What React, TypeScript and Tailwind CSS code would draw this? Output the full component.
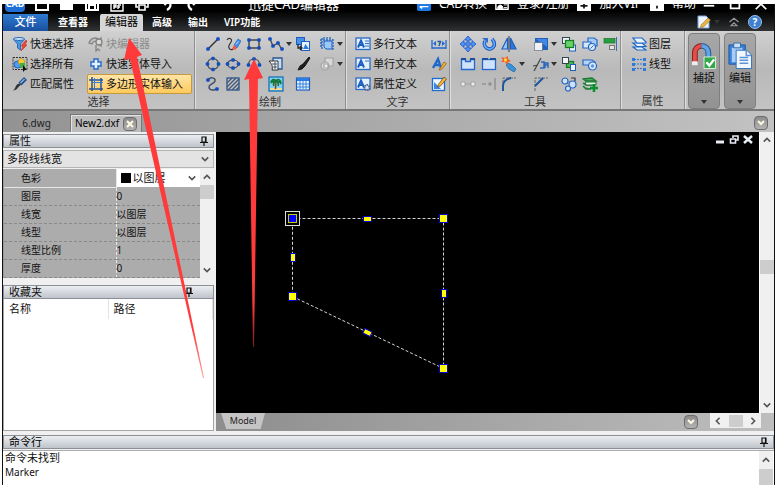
import type { ReactNode } from "react";

const B = "#1d5fc0";

function Svg({ children, size = 16 }: { children: ReactNode; size?: number }) {
  return (
    <svg width={size} height={size} viewBox="0 0 16 16" fill="none" className="shrink-0">
      {children}
    </svg>
  );
}

function Dot({ x, y }: { x: number; y: number }) {
  return <rect x={x - 1.75} y={y - 1.75} width="3.500" height="3.500" rx="1.200" fill="#0f4cc0" />;
}

const letterBox = (
  <>
    <rect x="1" y="2" width="14" height="11.500" fill="#e4effc" stroke="#2a69c4" strokeWidth="1.300" />
    <path d="M3 11.500 6 4.500 9 11.500M4.500 9h3.500" stroke={B} strokeWidth="2" />
  </>
);

const icons: Record<string, ReactNode> = {
  quickSelect: (
    <>
      <path d="M1 3h12L8.500 8v6L5.500 12V8z" fill="#4b97e0" stroke="#2c6db8" />
      <ellipse cx="7" cy="3" rx="5.500" ry="1.500" fill="#c5e0fa" stroke="#2c6db8" />
      <path d="m14 4-5 6h2l-2 5 6-6h-2l2-4z" fill="#f04535" stroke="#c52b22" strokeWidth=".6" />
    </>
  ),
  selectAll: (
    <>
      <rect x="1" y="1.500" width="14" height="12" stroke="#333" strokeDasharray="2 1" />
      <circle cx="5.500" cy="8.500" r="3.500" fill="#4f9cf0" stroke={B} />
      <path d="m6 5 3-3 4 3-2 4-4-1z" fill="#f5ca3a" stroke="#b98c10" strokeWidth=".7" />
      <rect x="8" y="7" width="5" height="5" fill="#46b03a" />
      <path d="M11 9v7l2-2h2z" fill="#111" />
    </>
  ),
  match: (
    <>
      <path d="M8 8 13.500 2.500" stroke="#234d86" strokeWidth="4" />
      <path d="m8.500 7 4-4" stroke="#8fb8ec" strokeWidth="1.300" />
      <path d="M9 8.500 6 11.500c-1 2-3 3-5 3 2-1 2-4 4-6l2-1z" fill="#333" />
    </>
  ),
  blockEdit: (
    <g stroke="#848484" strokeWidth="1.300">
      <path d="M1 7c2-6 8-6 10-3l2-2v8L10 8C8 4 5 5 4 8z" fill="#c0c0c0" />
      <circle cx="11" cy="6" r="3" fill="#dadada" />
      <path d="M8 9v6l2-2 2 2" />
    </g>
  ),
  plus: <path d="M6 3h4v3h3v4h-3v3H6v-3H3V6h3z" fill="#e4f0ff" stroke="#2469ca" strokeWidth="1.400" />,
  hash: (
    <>
      <path d="M4 1v14M1 4h14M1 13h14M13 2v13" stroke="#1f55a4" strokeWidth="1.500" />
      <path d="M6.500 2v11M3 6.500h12" stroke="#3d7bcf" />
    </>
  ),
  line: (
    <>
      <path d="M3 13 13 3" stroke="#333" strokeWidth="1.400" />
      <Dot x={3} y={13} />
      <Dot x={13} y={3} />
    </>
  ),
  freehand: (
    <>
      <path d="M2 4c2-3 6-1 4 2S3 10 4 12s3 2 4 1" stroke="#333" strokeWidth="1.200" />
      <path d="m9 9 4-6 3 2-4 7z" fill="#3f8af0" stroke="#1f60b4" strokeWidth=".6" />
      <path d="m7 13 2-4 3 3-2 2z" fill="#ea5c4c" />
      <path d="M11 8.500 13.500 5.500" stroke="#d6e7ff" />
    </>
  ),
  rect: (
    <>
      <path d="M3 4h10v8H3z" stroke="#444" strokeWidth="1.400" />
      <Dot x={3} y={4} />
      <Dot x={13} y={4} />
      <Dot x={3} y={12} />
      <Dot x={13} y={12} />
    </>
  ),
  polyline: (
    <>
      <path d="M2 3 5 10l5-3 3 5" stroke="#444" strokeWidth="1.300" />
      <Dot x={2} y={3} />
      <Dot x={5} y={10} />
      <Dot x={10} y={7} />
      <Dot x={14} y={13} />
    </>
  ),
  insert: (
    <>
      <rect x="1.500" y="1.500" width="8" height="7" fill="#4a90e8" stroke={B} />
      <rect x="6.500" y="5.500" width="8" height="9" fill="#e8f2ff" stroke={B} />
      <path d="M3 8v4h4M5 10l2 2-2 2" stroke="#222" strokeWidth="1.300" />
      <path d="m10.500 8 3.500 5H8z" fill="#2f7be0" />
    </>
  ),
  block: (
    <>
      <path d="M5 5h8v8H7L5 11z" fill="#9cc8f8" stroke={B} />
      <path d="M3 2v12M1 4h13M5 1v3M8 1v3M11 1v3M1 7h3M1 10h3M14 3v11" stroke="#2468c4" strokeWidth="1.300" strokeDasharray="2 1" />
    </>
  ),
  circle: (
    <>
      <circle cx="8" cy="8" r="5.500" stroke="#444" strokeWidth="1.200" />
      <Dot x={8} y={2.5} />
      <Dot x={8} y={13.5} />
      <Dot x={2.5} y={8} />
      <Dot x={13.5} y={8} />
    </>
  ),
  ellipse: (
    <>
      <ellipse cx="8" cy="8" rx="5.500" ry="4" stroke="#444" strokeWidth="1.200" />
      <Dot x={8} y={4} />
      <Dot x={8} y={12} />
      <Dot x={2.5} y={8} />
      <Dot x={13.5} y={8} />
    </>
  ),
  arc: (
    <>
      <path d="M2.500 9c0-8 11-8 11 0" stroke="#444" strokeWidth="1.200" />
      <Dot x={2.5} y={9} />
      <Dot x={8} y={3} />
      <Dot x={13.5} y={9} />
    </>
  ),
  cloud: (
    <>
      <path d="M5 2h9v11H5z" fill="#c5dcf6" stroke="#2b5791" strokeWidth="1.300" />
      <path d="M1 5h9v9H4c1-3 0-6-3-9z" fill="#f4f8fc" stroke="#333" />
      <path d="M4 8h5M5 11h4M7 6v7" stroke="#456" />
    </>
  ),
  brush: <path d="M14 1 8 8l-3 2-2 4 4-1 3-3 5-8z" fill="#1c1c1c" stroke="#1c1c1c" />,
  shapes: (
    <g fill="#d8d8d8" stroke="#a2a2a2" strokeWidth="1.200">
      <path d="M6 2h8v8H6z" />
      <circle cx="6" cy="10" r="4" />
      <path d="M5 8h4v4H5z" fill="#eee" />
    </g>
  ),
  spline: (
    <>
      <path d="M3 4c2-4 8-2 7 1S4 8 4 11s4 4 8 2" stroke="#3b4c66" strokeWidth="1.400" />
      <Dot x={3} y={4} />
      <Dot x={12} y={13} />
    </>
  ),
  hatch: (
    <>
      <rect x="2" y="2" width="12" height="12" fill="#bcc2cc" stroke="#2c538c" strokeWidth="1.300" />
      <path d="m2 7 5-5M2 11l9-9M3 14 14 3M7 14l7-7M11 14l3-3" stroke="#46566e" strokeWidth="1.300" />
    </>
  ),
  palm: (
    <>
      <rect x="1" y="1" width="14" height="14" fill="#7fd0f5" stroke="#1a72b8" strokeWidth="1.300" />
      <path d="M2 12h12v2H2z" fill="#f2dc94" />
      <path d="M8 5 7.500 13" stroke="#7b4c20" strokeWidth="1.500" />
      <path d="M8 5c-2-3-5-1-5 2 1-2 3-2 5-2 2 0 4 0 5 3 0-4-3-6-5-3-2 1-3 3-2 5M8 5c2 1 3 3 2 5" stroke="#127636" strokeWidth="1.600" />
    </>
  ),
  table: (
    <>
      <rect x="1.500" y="2" width="13" height="12" fill="#e8f4ff" stroke={B} strokeWidth="1.200" />
      <path d="M2 2h12v3H2z" fill="#2c7be0" />
      <path d="M2 8h12M2 11h12M5 5v8M8 5v8M11 5v8" stroke="#3b83dd" />
    </>
  ),
  mtext: (
    <>
      {letterBox}
      <path d="M10 5h4M10 7.500h4M10 10h4" stroke="#2e70c8" />
    </>
  ),
  text: (
    <>
      {letterBox}
      <path d="M10 5h4" stroke="#2e70c8" />
    </>
  ),
  attr: (
    <>
      {letterBox}
      <circle cx="12" cy="11.500" r="2.500" fill="#dbe6f6" stroke="#44648f" strokeDasharray="1.500 .7" strokeWidth="2" />
    </>
  ),
  dim: (
    <>
      <path d="M1 4v9M15 4v9M1 12h14" stroke="#2068cf" strokeWidth="1.300" />
      <path d="M5 5 2 7.500 5 10zM11 5l3 2.500-3 2.500z" fill="#2068cf" />
      <path d="M6.500 5.500h3L8 10" stroke="#1b57a6" strokeWidth="1.400" />
    </>
  ),
  textStyle: (
    <>
      <path d="M2 12 7 3l3 9M4 9h5" stroke="#1f68cc" strokeWidth="2.400" />
      <path d="m8 14 5-8 2.500 1.500-5 6z" fill="#f6ad25" stroke="#765317" strokeWidth=".6" />
    </>
  ),
  editText: (
    <>
      <rect x="1.500" y="2.500" width="12" height="12" fill="#edf5ff" stroke="#1f6cd0" strokeWidth="1.300" />
      <path d="M3 6v7h7z" fill="#3c86e4" />
      <path d="m7 9 6-8 2.500 2-6 7-3 1z" fill="#f3b532" stroke="#59441c" strokeWidth=".7" />
    </>
  ),
  move: <path d="m8 0 3.500 4H9v3h3V4.500L16 8l-4 3.500V9H9v3h2.500L8 16l-3.500-4H7V9H4v2.500L0 8l4-3.500V7h3V4H4.500z" fill="#4f92f2" stroke="#1b57c8" strokeWidth=".8" />,
  rotate: (
    <>
      <path d="M4 5c-3 7 6 11 9 5 1-3 0-5-2-7" stroke="#1758c4" strokeWidth="3.600" />
      <path d="M4 5c-3 7 6 11 9 5 1-3 0-5-2-7" stroke="#6fb0fa" strokeWidth="1.500" />
      <path d="M1 2h6v5z" fill="#2a6fd0" />
    </>
  ),
  mirror: (
    <>
      <path d="M6.500 2v11H1z" fill="#9fc7f6" stroke={B} strokeWidth="1.200" />
      <path d="M9.500 2v11H15z" fill="#2e78d8" stroke={B} strokeWidth="1.200" />
      <path d="M8 0v16" stroke="#234" />
    </>
  ),
  scale: (
    <>
      <rect x="2" y="2" width="13" height="12" fill="#225fb8" />
      <path d="M3 3h11v8z" fill="#4088e4" />
      <rect x="1.500" y="6.500" width="8" height="8" fill="#eef1f6" stroke="#3b4a60" strokeDasharray="1 1" />
    </>
  ),
  front: (
    <>
      <rect x="1.500" y="1.500" width="7" height="6" fill="#f4f4f4" stroke="#345" />
      <rect x="8.500" y="9" width="6" height="6" fill="#f4f4f4" stroke={B} />
      <rect x="4.500" y="4.500" width="8" height="7" fill="#6bd266" stroke="#148028" strokeWidth="1.300" />
    </>
  ),
  back: (
    <>
      <rect x="5.500" y="5.500" width="7" height="6" fill="#50ba4e" stroke="#148028" strokeWidth="1.300" />
      <rect x="1.500" y="1.500" width="6" height="6" fill="#f4f4f4" stroke="#345" />
      <rect x="9.500" y="8.500" width="5" height="6" fill="#f4f4f4" stroke={B} />
    </>
  ),
  group: (
    <>
      <path d="M6 2h6l3 2v6H6z" fill="#a6caf6" stroke="#2468c7" strokeWidth="1.200" />
      <path d="M1 6h8v6H1z" fill="#d8e8fb" stroke="#2468c7" strokeWidth="1.200" />
      <circle cx="10" cy="11" r="3.500" fill="#dceafb" stroke="#2468c7" strokeWidth="1.200" />
      <path d="m8.500 12.500 3-3" stroke="#2468c7" />
    </>
  ),
  ungroup: (
    <>
      <path d="M1 4h9l3 2v3H1z" fill="#b8d3f6" stroke="#2468c7" strokeWidth="1.200" />
      <circle cx="10.500" cy="10" r="4" fill="#dceafb" stroke="#2468c7" strokeWidth="1.200" />
      <circle cx="10.500" cy="10" r="1.700" fill="#5b96e2" />
    </>
  ),
  align: (
    <>
      <rect x="2" y="2.500" width="11" height="4.500" fill="#26a03a" stroke="#1c7130" strokeWidth=".7" />
      <rect x="7.500" y="9.500" width="5" height="4" fill="#e4e4e4" stroke="#777" />
      <path d="M14.500 1v14" stroke="#3b6db8" />
    </>
  ),
  breakTwo: (
    <>
      <path d="M1.500 3.500h4v2h5v-2h4v10h-13z" fill="#cfe2fb" stroke="#2468cc" strokeWidth="1.300" />
      <path d="M1 3h5M10 3h5" stroke="#1b4f9c" strokeWidth="2" />
    </>
  ),
  breakOne: (
    <>
      <rect x="1.500" y="3.500" width="13" height="10" fill="#cfe2fb" stroke="#2468cc" strokeWidth="1.300" />
      <path d="M1 3h6M9 3h6" stroke="#1b4f9c" strokeWidth="2" />
    </>
  ),
  explode: (
    <>
      <path d="m7 7 4 2 4 4-2 3-5-3-3-4z" fill="#3494dd" stroke="#285d90" strokeWidth=".7" />
      <path d="m0 1 4 1 3-2v3l3 2-3 1-1 3-2-3-4 0 2-2z" fill="#f0602a" />
      <circle cx="4.500" cy="4" r="1.700" fill="#ffd53b" />
    </>
  ),
  trim: (
    <>
      <path d="M1 15 8 2M0 10l5-1" stroke="#444" strokeWidth="1.200" />
      <path d="M8 6h3v6H7M12 12V7h3v5M11 9h4" stroke="#2c68ba" strokeWidth="1.500" />
    </>
  ),
  join: (
    <>
      <path d="M3 8h10" stroke="#a2a2a2" />
      <path d="M1 6h4v4H1zM11 6h4v4h-4z" fill="#eee" stroke="#a2a2a2" />
    </>
  ),
  extend: <path d="M1 8h4M7 8h4M14 2v12M9 6v4" stroke="#939393" strokeWidth="1.600" />,
  fillet: (
    <>
      <path d="M2 15V2h13" stroke="#666" strokeDasharray="3 1" />
      <path d="M2 15V10c0-5 3-7 8-8" stroke="#1b559f" strokeWidth="1.900" />
    </>
  ),
  chamfer: (
    <>
      <path d="M2 15V2h13" stroke="#666" strokeDasharray="3 1" />
      <path d="M2 10 10 2" stroke="#1b559f" strokeWidth="1.900" />
    </>
  ),
  copies: (
    <g fill="#cfe1f8" stroke="#2766c0" strokeWidth="1.200">
      <circle cx="4" cy="5" r="3" />
      <circle cx="11.500" cy="8.500" r="3.500" />
      <circle cx="7" cy="12.500" r="2.500" />
      <path d="M10 2h4v3" stroke="#333" fill="none" />
    </g>
  ),
  addLayer: (
    <>
      <path d="M1 3 10 2l4 3H4zM1 7l3 2h9M1 10l3 3h5" fill="#4ab45c" stroke="#1d7735" strokeWidth="1.300" />
      <path d="M3 6h11v3H4z" fill="#e3f4e4" stroke="#1d7735" />
      <path d="M12 8v8M8 12h8" stroke="#0c8f2c" strokeWidth="2.600" />
    </>
  ),
  layers: (
    <g fill="#e9f3ff" stroke="#1f66c4" strokeWidth="1.200">
      <path d="M2 11h9l4 3H6z" />
      <path d="M2 7h9l4 3.500H6z" />
      <path d="M2 2h9l4 4v1H6z" />
    </g>
  ),
  linetype: (
    <>
      <path d="M3 3.500h10M3 8h10M3 12.500h10" stroke="#2d74cc" strokeDasharray="2 1" />
      <path d="M1 2h3v3H1zM12 2h3v3h-3zM1 7h3v3H1zM12 7h3v3h-3zM1 12h3v3H1zM12 12h3v3h-3z" fill="#2f78dc" />
    </>
  ),
  // title bar
  newFile: <path d="M2 1h9l3 3v10H2z" stroke="#fff" strokeWidth="2" />,
  open: <path d="M1 14V3h5l2 2h6v9z" fill="#fff" />,
  save: <path d="M2 2h12v12H2zM5 14V9h6v5" stroke="#fff" strokeWidth="2" />,
  pdf: <path d="M2 1h12v14H2zM5 13V9h2v2H5M9 9v4M9 9h3M9 11h2" stroke="#fff" strokeWidth="1.400" />,
  print: <path d="M4 6V2h8v4M4 11H2V6h12v5h-2M5 9h6v5H5z" stroke="#fff" strokeWidth="1.600" />,
  undo: <path d="M8 14c5-3 5-9-3-9M7 1 3 5l4 4" stroke="#fff" strokeWidth="2.200" />,
  redo: <path d="M8 14C3 11 3 5 11 5M9 1l4 4-4 4" stroke="#fff" strokeWidth="2.200" />,
  convert: (
    <>
      <rect width="16" height="16" rx="2" fill="#1e7be6" />
      <path d="M3 6h9M4 11h9M10 4l3 2M6 13l-3-2" stroke="#fff" strokeWidth="1.500" />
    </>
  ),
  user: (
    <>
      <path d="M1 1h14v13H1z" stroke="#fff" strokeWidth="1.600" />
      <path d="M3 13c0-5 6-5 6 0zM10 9h4M10 12h4" fill="#fff" stroke="#fff" />
    </>
  ),
  vip: (
    <>
      <path d="M0 0h16v16H0z" fill="#fff" />
      <path d="M4 6h8M8 6v7M4 10h8" stroke="#111" strokeWidth="2" />
    </>
  ),
  help: (
    <>
      <path d="M0 0h16v16H0z" fill="#fff" />
      <path d="M8 3v5M8 10v3" stroke="#111" strokeWidth="2" />
    </>
  ),
  minimize: <path d="M2 10h12" stroke="#fff" strokeWidth="2" />,
  maximize: <path d="M3 2h10v11H3z" stroke="#fff" strokeWidth="2" />,
  close: <path d="m2 2 12 12M14 2 2 14" stroke="#fff" strokeWidth="2" />,
};

function Icon({ name, size = 16 }: { name: string; size?: number }) {
  return <Svg size={size}>{icons[name]}</Svg>;
}

function Caret() {
  return (
    <svg width="6" height="4" viewBox="0 0 6 4" className="shrink-0">
      <path d="M0 0h6L3 4z" fill="#333" />
    </svg>
  );
}

function Chevron({ dir = "down" }: { dir?: "up" | "down" | "left" | "right" }) {
  const paths = {
    down: "M1 3l4 4 4-4",
    up: "M1 7l4-4 4 4",
    left: "M7 1 3 5l4 4",
    right: "M3 1l4 4-4 4",
  };
  return (
    <svg width="8" height="8" viewBox="0 0 10 10" fill="none" className="shrink-0">
      <path d={paths[dir]} stroke="#555" strokeWidth="2" />
    </svg>
  );
}

function Pin() {
  return (
    <svg width="8" height="10" viewBox="0 0 8 10" fill="none">
      <path d="M2 1h4v5H2zM0 6.500h8M4 7v3M5.500 1v5" stroke="#111" strokeWidth="1.200" />
    </svg>
  );
}

function LabelTool({ icon, label, className = "" }: { icon: string; label: string; className?: string }) {
  return (
    <button type="button" className={`flex h-5 items-center gap-0.5 whitespace-nowrap ${className}`}>
      <Icon name={icon} />
      {label}
    </button>
  );
}

function Tool({ icon, menu = false }: { icon: string; menu?: boolean }) {
  if (!icon) return <span />;
  return (
    <button type="button" aria-label={icon} className="flex h-5 items-center gap-0.5 pl-0.5">
      <Icon name={icon} />
      {menu && <Caret />}
    </button>
  );
}

function Group({ title, className = "", children }: { title: string; className?: string; children: ReactNode }) {
  return (
    <section className="flex flex-col border-r border-[#8f8f8f] shadow-[1px_0_0_#dedede]">
      <div className={`grid h-[63px] content-start pt-[3px] ${className}`}>{children}</div>
      <h2 className="text-center leading-4 text-[#333]">{title}</h2>
    </section>
  );
}

function PanelHeader({ title, className = "" }: { title: string; className?: string }) {
  return (
    <header
      className={`flex h-[14px] shrink-0 items-center justify-between border border-[#8b9097] bg-linear-to-b from-[#eceef1] to-[#bfc4cb] pl-[5px] text-[11px] leading-3 ${className}`}
    >
      <h2>{title}</h2>
      <button type="button" aria-label="pin">
        <Pin />
      </button>
    </header>
  );
}

function Scrollbar({ thumb }: { thumb: string }) {
  return (
    <div className="flex w-[14px] shrink-0 flex-col items-center justify-between bg-[#f0f0f0]">
      <button type="button" aria-label="up" className="flex h-4 items-center">
        <Chevron dir="up" />
      </button>
      <div className="w-full flex-1">
        <div className={`w-full bg-[#cdcdcd] ${thumb}`} />
      </div>
      <button type="button" aria-label="down" className="flex h-4 items-center">
        <Chevron />
      </button>
    </div>
  );
}

function MiniButton({ children, label }: { children: ReactNode; label: string }) {
  return (
    <button
      type="button"
      aria-label={label}
      className="flex size-[14px] items-center justify-center rounded-sm border border-[#6d6d6d] bg-linear-to-b from-[#8b8b8b] to-[#b3b3b3]"
    >
      {children}
    </button>
  );
}

const yellowV = <path d="m1 2 3 3 3-3" stroke="#fffbe0" strokeWidth="2" fill="none" />;

const quickAccess = ["newFile", "open", "save", "pdf", "print", "undo", "redo"];

const accountLinks = [
  { icon: "convert", label: "CAD转换" },
  { icon: "user", label: "登录/注册" },
  { icon: "vip", label: "加入VIP" },
  { icon: "help", label: "帮助" },
];

const drawTools = [
  "line", "freehand", "rect", "polyline+", "insert", "block+",
  "circle", "ellipse", "arc", "cloud", "brush", "shapes+",
  "spline", "hatch", "", "palm", "table",
];

const editTools = [
  "move", "rotate", "mirror", "scale+", "front", "group", "align",
  "breakTwo", "breakOne", "explode+", "trim+", "back", "ungroup", "",
  "join", "extend", "fillet", "chamfer", "copies", "addLayer",
];

const properties = [
  { name: "图层", value: "0" },
  { name: "线宽", value: "以图层" },
  { name: "线型", value: "以图层" },
  { name: "线型比例", value: "1" },
  { name: "厚度", value: "0" },
];

function TitleBar() {
  return (
    <div className="flex h-2 items-end overflow-hidden bg-black text-xs text-white">
      <div className="flex h-4 flex-1 items-center whitespace-nowrap leading-4">
        <span className="ml-0.5 mr-1 w-5 rounded-sm bg-[#1e6fd8] text-center text-[9px] font-bold leading-4">CAD</span>
        {quickAccess.map((name) => (
          <button key={name} type="button" aria-label={name} className="flex w-[25px] justify-center">
            <Icon name={name} />
          </button>
        ))}
        <h1 className="ml-11 text-[13px]">迅捷CAD编辑器</h1>
        <div className="ml-auto flex gap-2">
          {accountLinks.map((l) => (
            <a key={l.label} href="#" className="flex items-center gap-2">
              <Icon name={l.icon} size={14} />
              {l.label}
            </a>
          ))}
        </div>
        {["minimize", "maximize", "close"].map((name) => (
          <button key={name} type="button" aria-label={name} className="flex w-[26px] justify-center">
            <Icon name={name} size={14} />
          </button>
        ))}
      </div>
    </div>
  );
}

function TabBar() {
  return (
    <nav className="flex h-[19px] items-end bg-linear-to-b from-[#050505] to-[#303234] text-[10px] font-semibold text-white">
      <button type="button" className="h-[17px] w-[45px] bg-linear-to-b from-[#2f7bd0] to-[#1a50a0] text-[11px] font-medium">文件</button>
      <button type="button" className="ml-[10px] h-[17px]">查看器</button>
      <button type="button" className="ml-3 h-[17px] w-[43px] rounded-t-xs bg-[#d6d6d6] text-[11px] font-normal text-black">
        编辑器
      </button>
      <button type="button" className="ml-[9px] h-[17px]">高级</button>
      <button type="button" className="ml-4 h-[17px]">输出</button>
      <button type="button" className="ml-4 h-[17px]">VIP功能</button>
      <div className="ml-auto mr-3 flex h-full items-center gap-2">
        <button type="button" aria-label="style" className="flex items-center gap-0.5">
          <Svg>
            <path d="M2 2h8l3 3v9H2z" fill="#eef5ff" stroke="#79a6e0" />
            <path d="m5 11 7-7 2.500 2-7 7-3 1z" fill="#f2b33c" stroke="#805a1a" strokeWidth=".5" />
          </Svg>
          <Caret />
        </button>
        <button type="button" aria-label="collapse">
          <Svg size={12}>
            <path d="m2 8 6-5 6 5M4 13l4-4 4 4z" stroke="#999" strokeWidth="1.500" />
          </Svg>
        </button>
        <button type="button" className="size-[14px] rounded-full border border-[#9bc0f0] bg-[#3e7fd2] text-[10px] font-bold leading-3">
          ?
        </button>
      </div>
    </nav>
  );
}

function renderTool(t: string, i: number) {
  return <Tool key={i} icon={t.replace("+", "")} menu={t.endsWith("+")} />;
}

function Ribbon() {
  return (
    <div className="flex h-[79px] border-b border-[#777] bg-linear-to-b from-[#d0d0d0] via-[#b9b9b9] to-[#c3c3c3] text-[11px] text-[#111]">
      <Group title="选择" className="grid-cols-[84px_107px]">
        <LabelTool icon="quickSelect" label="快速选择" className="pl-[9px]" />
        <LabelTool icon="blockEdit" label="块编辑器" className="pl-px text-[#8c8c8c]" />
        <LabelTool icon="selectAll" label="选择所有" className="pl-[9px]" />
        <LabelTool icon="plus" label="快速实体导入" className="pl-px" />
        <LabelTool icon="match" label="匹配属性" className="pl-[9px]" />
        <LabelTool
          icon="hash"
          label="多边形实体输入"
          className="mr-0.5 rounded-xs border border-[#c59a3c] bg-linear-to-b from-[#ffe5a6] to-[#ffc95a]"
        />
      </Group>
      <Group title="绘制" className="grid-cols-[20px_21px_22px_27px_24px_28px] pl-2">
        {drawTools.map(renderTool)}
      </Group>
      <Group title="文字" className="grid-cols-[75px_20px] pl-2">
        <LabelTool icon="mtext" label="多行文本" className="pl-px" />
        <Tool icon="dim" />
        <LabelTool icon="text" label="单行文本" className="pl-px" />
        <Tool icon="textStyle" />
        <LabelTool icon="attr" label="属性定义" className="pl-px" />
        <Tool icon="editText" />
      </Group>
      <Group title="工具" className="grid-cols-[21px_20px_32px_28px_21px_20px_20px] pl-2">
        {editTools.map(renderTool)}
      </Group>
      <Group title="属性" className="grid-cols-[63px]">
        <LabelTool icon="layers" label="图层" className="pl-[10px]" />
        <LabelTool icon="linetype" label="线型" className="pl-[10px]" />
      </Group>
      <div className="flex gap-1 px-[3px] pt-0.5">
        <BigButton label="捕捉">
          <path d="M4 22V11a7 7 0 0 1 7-7" stroke="#8c1f1f" strokeWidth="6" />
          <path d="M4 22V11a7 7 0 0 1 7-7" stroke="#e34f48" strokeWidth="4" />
          <path d="M11 4a7 7 0 0 1 7 7v11" stroke="#1c5a9f" strokeWidth="6" />
          <path d="M11 4a7 7 0 0 1 7 7v11" stroke="#62a4e5" strokeWidth="4" />
          <path d="M1 20h6v4H1z" fill="#eee" />
          <path d="M13.500 15.500h12v12h-12z" fill="#33a847" stroke="#dff3df" />
          <path d="m16 21 3 3.500 5-6.500" stroke="#fff" strokeWidth="2.500" />
        </BigButton>
        <BigButton label="编辑">
          <path d="M2 3h17v20H2z" fill="#3a82d8" stroke="#1b57a5" />
          <path d="M5 6h11v15H5z" fill="#a9cdf5" />
          <path d="M7 1h7v5H7z" fill="#ccdff5" stroke="#3469a8" />
          <path d="M9.500 8.500h11l5 5v14h-16z" fill="#f2f7ff" stroke="#2f6fc0" />
          <path d="M20 9v5h5M13 16h9M13 19h9M13 22h9" stroke="#5f93d1" strokeWidth="1.500" />
        </BigButton>
      </div>
    </div>
  );
}

function BigButton({ label, children }: { label: string; children: ReactNode }) {
  return (
    <button
      type="button"
      className="flex h-[76px] w-8 flex-col items-center rounded-sm border border-[#7f7f7f] bg-linear-to-b from-[#a7a7a7] to-[#929292] pt-2"
    >
      <svg width="26" height="28" viewBox="0 0 27 29" fill="none">
        {children}
      </svg>
      <span className="leading-4">{label}</span>
      <span className="mb-1 mt-auto">
        <Caret />
      </span>
    </button>
  );
}

function DocTabs() {
  return (
    <div className="flex h-[22px] shrink-0 items-end border-t border-[#777] bg-linear-to-r from-[#939393] to-[#c2c2c2] text-[10px]">
      <button type="button" className="h-[18px] w-[67px] text-center text-[#222]">6.dwg</button>
      <div className="flex h-[18px] items-center gap-1 border border-b-0 border-[#777] bg-[#bcbcbc] px-1 shadow-[inset_1px_1px_0_#e2e2e2]">
        <button type="button">New2.dxf</button>
        <MiniButton label="close tab">
          <svg width="8" height="8" viewBox="0 0 8 8">
            <path d="m1 1 6 6M7 1 1 7" stroke="#fffbe0" strokeWidth="2" />
          </svg>
        </MiniButton>
      </div>
      <div className="mb-0.5 ml-auto mr-[6px]">
        <MiniButton label="tab list">
          <svg width="8" height="8" viewBox="0 0 8 8">{yellowV}</svg>
        </MiniButton>
      </div>
    </div>
  );
}

function PropertyPanel() {
  const cell = "h-[18px] border-b border-dashed border-[#8a8a8a] p-0 text-left font-normal";
  return (
    <aside className="flex w-[211px] shrink-0 flex-col bg-[#f0f0f0] pt-0.5 text-[#111]">
      <PanelHeader title="属性" className="pr-[5px]" />
      <div className="relative mt-0.5 flex h-[18px] items-center border border-[#b5b5b5] bg-[#e3e3e3]">
        <select aria-label="对象" className="h-full w-full appearance-none pl-[3px] text-[11px] leading-4 outline-none">
          <option>多段线线宽</option>
        </select>
        <span className="pointer-events-none absolute right-1 flex">
          <Chevron />
        </span>
      </div>
      <div className="mt-px flex border-l border-[#999]">
        <table className="flex-1 table-fixed border-collapse bg-[#acacac] text-[10px] leading-4">
          <tbody>
            <tr>
              <th scope="row" className="h-[18px] w-[112px] border-b border-r border-[#e6e6e6] p-0 pl-[17px] text-left font-normal">
                <label htmlFor="color">色彩</label>
              </th>
              <td className="relative h-[18px] bg-white p-0">
                <select id="color" className="h-[17px] w-full appearance-none pl-4 text-[11px] leading-4 outline-none">
                  <option>以图层</option>
                </select>
                <span className="pointer-events-none absolute left-1 top-1 size-[10px] bg-black" />
                <span className="pointer-events-none absolute right-1 top-[5px] flex">
                  <Chevron />
                </span>
              </td>
            </tr>
            {properties.map((p) => (
              <tr key={p.name}>
                <th scope="row" className={`${cell} border-r border-r-[#e6e6e6] pl-[17px]`}>{p.name}</th>
                <td className={cell}>{p.value}</td>
              </tr>
            ))}
          </tbody>
        </table>
        <Scrollbar thumb="h-[14px]" />
      </div>
      <PanelHeader title="收藏夹" className="mt-[7px] pr-5" />
      <div className="flex-1 border border-t-0 border-[#a5a5a5] bg-white text-[11px]">
        <table className="w-full table-fixed leading-5">
          <thead>
            <tr>
              <th className="w-[104px] border-r border-[#e3e3e3] p-0 pl-[5px] text-left font-normal">名称</th>
              <th className="border-r border-[#e3e3e3] p-0 pl-[5px] text-left font-normal">路径</th>
            </tr>
          </thead>
        </table>
      </div>
    </aside>
  );
}

function Drawing() {
  const corners = [[227, 86], [227, 236], [76, 164]];
  return (
    <svg width="400" height="260" viewBox="0 0 400 260" fill="none" className="max-w-full">
      <path d="M76.500 86.500h151v150l-151-72z" stroke="#d5d5d5" strokeDasharray="3 2" />
      {corners.map(([x, y]) => (
        <rect key={`${x}-${y}`} x={x - 3.5} y={y - 3.5} width="8" height="8" fill="#ff0" stroke="#0000d8" />
      ))}
      <g fill="#ff0" stroke="#0000c8">
        <rect x="147.500" y="84.500" width="8" height="5" />
        <rect x="74.500" y="121.500" width="5" height="8" />
        <rect x="225.500" y="157.500" width="5" height="8" />
        <rect x="147.500" y="198" width="8" height="5" transform="rotate(26 151.500 200.500)" />
      </g>
      <rect x="69.500" y="79.500" width="14" height="14" fill="#000" stroke="#ddd" />
      <rect x="72.500" y="82.500" width="8" height="8" fill="#00f" stroke="#c9c900" />
    </svg>
  );
}

function Workspace() {
  return (
    <main className="ml-0.5 flex min-w-0 flex-1 flex-col bg-[#a0a0a0]">
      <div className="flex min-h-0 flex-1">
        <div className="relative min-w-0 flex-1 overflow-hidden bg-black">
          <Drawing />
          <div className="absolute right-[6px] top-[3px] flex gap-1 text-white">
            <button type="button" aria-label="minimize drawing">
              <svg width="10" height="9" viewBox="0 0 10 9"><path d="M1 7h8" stroke="#e8edf5" strokeWidth="3" /></svg>
            </button>
            <button type="button" aria-label="restore drawing">
              <svg width="10" height="9" viewBox="0 0 10 9" fill="none">
                <path d="M4 3V1h5v4H7M1.500 4h5v4h-5z" stroke="#e8edf5" strokeWidth="1.600" />
              </svg>
            </button>
            <button type="button" aria-label="close drawing">
              <svg width="10" height="9" viewBox="0 0 10 9"><path d="m1 1 8 7M9 1 1 8" stroke="#e8edf5" strokeWidth="2.500" /></svg>
            </button>
          </div>
        </div>
        <div className="flex border-l border-white">
          <Scrollbar thumb="mt-[112px] h-[14px]" />
        </div>
      </div>
      <div className="flex h-[18px] shrink-0 items-center bg-linear-to-r from-[#8e8e8e] to-[#bebebe]">
        <button
          type="button"
          className="ml-[5px] flex h-4 w-11 items-center justify-center self-start bg-[#c4c4c4] text-[9px] text-[#222] [clip-path:polygon(0_0,100%_0,90%_100%,12%_100%)]"
        >
          Model
        </button>
        <div className="ml-auto mr-3 flex">
          <MiniButton label="layout list">
            <svg width="8" height="8" viewBox="0 0 8 8">{yellowV}</svg>
          </MiniButton>
        </div>
        <div className="mr-[13px] flex h-[15px] w-[51px] items-center justify-between self-start bg-[#f0f0f0] px-1">
          <button type="button" aria-label="left" className="flex"><Chevron dir="left" /></button>
          <div className="h-3 w-[14px] bg-[#cdcdcd]" />
          <button type="button" aria-label="right" className="flex"><Chevron dir="right" /></button>
        </div>
      </div>
    </main>
  );
}

function CommandLine() {
  return (
    <footer className="flex h-[54px] shrink-0 flex-col bg-[#f0f0f0] pt-[4px]">
      <PanelHeader title="命令行" className="pr-[5px]" />
      <div className="mt-px flex flex-1 overflow-hidden border-t border-[#aaa] bg-white">
        <div className="flex-1 pl-0.5 text-[11px] leading-[14px] text-[#111]">
          <p>命令未找到</p>
          <p className="text-[10px]">Marker</p>
        </div>
        <div className="mr-px flex w-[14px] flex-col items-center bg-[#f0f0f0]">
          <button type="button" aria-label="scroll up" className="flex h-[18px] items-center">
            <Chevron dir="up" />
          </button>
          <div className="w-full flex-1 bg-[#cdcdcd]" />
        </div>
      </div>
    </footer>
  );
}

function Arrows() {
  return (
    <svg width="280" height="400" viewBox="0 0 280 400" className="pointer-events-none absolute left-0 top-0">
      <defs>
        <linearGradient id="fade" x1="0" y1="0" x2="0" y2="1">
          <stop offset=".85" stopColor="#ff3a3a" />
          <stop offset="1" stopColor="#ff3a3a" stopOpacity=".5" />
        </linearGradient>
      </defs>
      <path d="M129 38 142 55 137 57 204 378 203 378 130 59 124 60z" fill="url(#fade)" />
      <path d="M254 59 263 78 258 79 254 347 253 347 249 79 244 80z" fill="url(#fade)" />
    </svg>
  );
}

export default function App() {
  return (
    <div className="relative h-screen overflow-hidden bg-white px-0.5 pt-1 font-['Noto_Sans','Noto_Sans_CJK_SC',sans-serif]">
      <div className="flex h-full flex-col border-x border-[#111] bg-[#f0f0f0]">
        <TitleBar />
        <TabBar />
        <Ribbon />
        <DocTabs />
        <div className="flex min-h-0 flex-1">
          <PropertyPanel />
          <Workspace />
        </div>
        <CommandLine />
      </div>
      <Arrows />
    </div>
  );
}
